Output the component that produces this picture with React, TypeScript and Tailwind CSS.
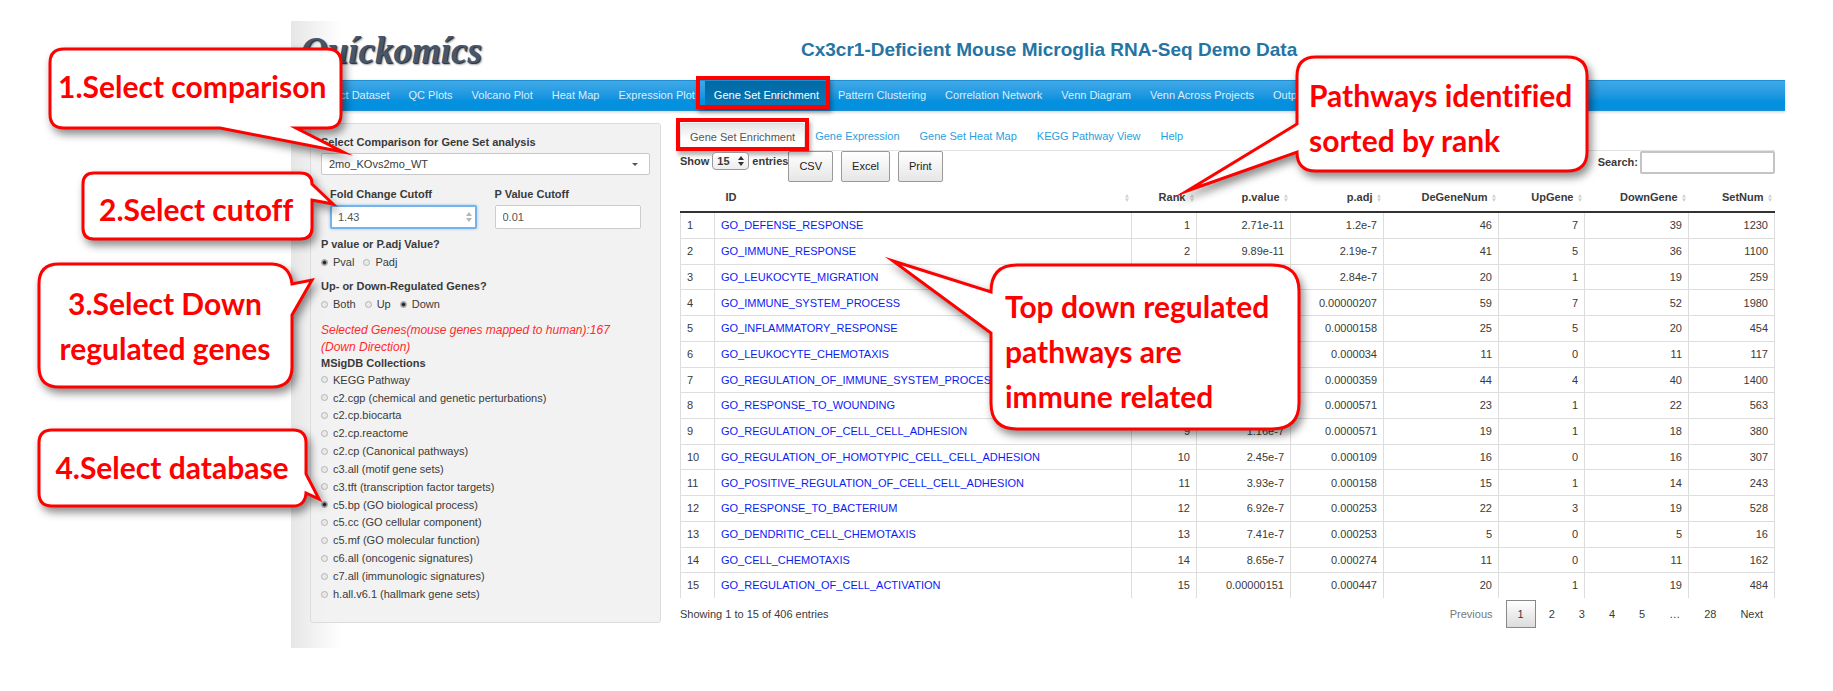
import React from "react";

const NAV = [
  "Select Dataset",
  "QC Plots",
  "Volcano Plot",
  "Heat Map",
  "Expression Plot",
  "Gene Set Enrichment",
  "Pattern Clustering",
  "Correlation Network",
  "Venn Diagram",
  "Venn Across Projects",
  "Output",
];

const TABS = ["Gene Set Enrichment", "Gene Expression", "Gene Set Heat Map", "KEGG Pathway View", "Help"];

const COLLECTIONS = [
  "KEGG Pathway",
  "c2.cgp (chemical and genetic perturbations)",
  "c2.cp.biocarta",
  "c2.cp.reactome",
  "c2.cp (Canonical pathways)",
  "c3.all (motif gene sets)",
  "c3.tft (transcription factor targets)",
  "c5.bp (GO biological process)",
  "c5.cc (GO cellular component)",
  "c5.mf (GO molecular function)",
  "c6.all (oncogenic signatures)",
  "c7.all (immunologic signatures)",
  "h.all.v6.1 (hallmark gene sets)",
];

const COLUMNS = [
  { name: "Rank", width: "w-[65px]" },
  { name: "p.value", width: "w-[94px]" },
  { name: "p.adj", width: "w-[93px]" },
  { name: "DeGeneNum", width: "w-[115px]" },
  { name: "UpGene", width: "w-[86px]" },
  { name: "DownGene", width: "w-[104px]" },
  { name: "SetNum", width: "w-[86px]" },
];

const ROWS: string[][] = [
  ["GO_DEFENSE_RESPONSE", "1", "2.71e-11", "1.2e-7", "46", "7", "39", "1230"],
  ["GO_IMMUNE_RESPONSE", "2", "9.89e-11", "2.19e-7", "41", "5", "36", "1100"],
  ["GO_LEUKOCYTE_MIGRATION", "", "", "2.84e-7", "20", "1", "19", "259"],
  ["GO_IMMUNE_SYSTEM_PROCESS", "", "", "0.00000207", "59", "7", "52", "1980"],
  ["GO_INFLAMMATORY_RESPONSE", "", "", "0.0000158", "25", "5", "20", "454"],
  ["GO_LEUKOCYTE_CHEMOTAXIS", "", "", "0.000034", "11", "0", "11", "117"],
  ["GO_REGULATION_OF_IMMUNE_SYSTEM_PROCESS", "", "", "0.0000359", "44", "4", "40", "1400"],
  ["GO_RESPONSE_TO_WOUNDING", "", "", "0.0000571", "23", "1", "22", "563"],
  ["GO_REGULATION_OF_CELL_CELL_ADHESION", "9", "1.16e-7", "0.0000571", "19", "1", "18", "380"],
  ["GO_REGULATION_OF_HOMOTYPIC_CELL_CELL_ADHESION", "10", "2.45e-7", "0.000109", "16", "0", "16", "307"],
  ["GO_POSITIVE_REGULATION_OF_CELL_CELL_ADHESION", "11", "3.93e-7", "0.000158", "15", "1", "14", "243"],
  ["GO_RESPONSE_TO_BACTERIUM", "12", "6.92e-7", "0.000253", "22", "3", "19", "528"],
  ["GO_DENDRITIC_CELL_CHEMOTAXIS", "13", "7.41e-7", "0.000253", "5", "0", "5", "16"],
  ["GO_CELL_CHEMOTAXIS", "14", "8.65e-7", "0.000274", "11", "0", "11", "162"],
  ["GO_REGULATION_OF_CELL_ACTIVATION", "15", "0.00000151", "0.000447", "20", "1", "19", "484"],
];

function Radio({ name, label, checked = false }: { name: string; label: string; checked?: boolean }) {
  return (
    <label className="flex items-center gap-[5px]">
      <input
        type="radio"
        name={name}
        defaultChecked={checked}
        className="size-[7px] appearance-none rounded-full border border-[#b4b4b4] bg-[#e9e9e9] checked:border-[#a0a0a0] checked:bg-[radial-gradient(circle,#222_1px,#e0e0e0_3px)]"
      />
      {label}
    </label>
  );
}

function SortIcon() {
  return (
    <svg viewBox="0 0 4 8" className="absolute right-[3px] bottom-[9px] h-2 w-1" fill="#d2d2d2" aria-hidden="true">
      <path d="M2 0 4 3.4H0zM2 8 0 4.6h4z" />
    </svg>
  );
}

function Spinner({ color }: { color: string }) {
  return (
    <svg viewBox="0 0 6 10" className="pointer-events-none absolute top-1/2 right-[5px] h-[10px] w-[6px] -translate-y-1/2" fill={color} aria-hidden="true">
      <path d="M3 0 6 4H0zM3 10 0 6h6z" />
    </svg>
  );
}

function Callout({
  place,
  size,
  d,
  textPlace,
  lines,
}: {
  place: string;
  size: [number, number];
  d: string;
  textPlace: string;
  lines: string[];
}) {
  return (
    <div className={`pointer-events-none absolute ${place}`}>
      <svg width={size[0]} height={size[1]} className="overflow-visible drop-shadow-[3px_5px_4px_rgba(0,0,0,0.45)]" aria-hidden="true">
        <path d={d} fill="#fff" stroke="#f00" strokeWidth="3" strokeMiterlimit="10" />
      </svg>
      <p className={`absolute font-['Lato','Open_Sans',sans-serif] text-[30px] leading-[45px] font-bold whitespace-nowrap text-[#f00] [font-variant-ligatures:none] ${textPlace}`}>
        {lines.map((line) => (
          <span key={line} className="block">
            {line}
          </span>
        ))}
      </p>
    </div>
  );
}

function Sidebar() {
  return (
    <aside className="flex h-[500px] w-[351px] shrink-0 flex-col rounded-[3px] border border-[#dcdcdc] bg-[#f1f1f1]/90 px-[10px] pt-[10px]">
      <label htmlFor="comparison" className="font-bold leading-4">
        Select Comparison for Gene Set analysis
      </label>
      <div className="relative mt-[3px]">
        <select
          id="comparison"
          className="h-[22px] w-full appearance-none rounded-[2px] border border-[#c8c8c8] bg-white px-[7px]"
        >
          <option>2mo_KOvs2mo_WT</option>
        </select>
        <svg viewBox="0 0 6 3" className="pointer-events-none absolute top-[10px] right-3 h-[3px] w-[6px]" fill="#555" aria-hidden="true">
          <path d="M0 0h6L3 3z" />
        </svg>
      </div>
      <div className="mt-[11px] grid grid-cols-2 gap-[18px] px-[9px]">
        <div>
          <label htmlFor="fold" className="block font-bold leading-4">
            Fold Change Cutoff
          </label>
          <div className="relative mt-[3px]">
            <input
              id="fold"
              defaultValue="1.43"
              className="h-6 w-full rounded-[2px] border-2 border-[#74b3ec] bg-white px-[6px] text-[#555] shadow-[0_0_3px_#8fc4f2]"
            />
            <Spinner color="#b5b5b5" />
          </div>
        </div>
        <div>
          <label htmlFor="pvalue" className="block font-bold leading-4">
            P Value Cutoff
          </label>
          <input
            id="pvalue"
            defaultValue="0.01"
            className="mt-[3px] h-6 w-full rounded-[2px] border border-[#ccc] bg-white px-[7px] text-[#555]"
          />
        </div>
      </div>
      <fieldset className="mt-[7px]">
        <legend className="font-bold leading-4">P value or P.adj Value?</legend>
        <div className="flex gap-[9px] leading-5">
          <Radio name="ptype" label="Pval" checked />
          <Radio name="ptype" label="Padj" />
        </div>
      </fieldset>
      <fieldset className="mt-[6px]">
        <legend className="font-bold leading-4">Up- or Down-Regulated Genes?</legend>
        <div className="flex gap-[9px] leading-5">
          <Radio name="direction" label="Both" />
          <Radio name="direction" label="Up" />
          <Radio name="direction" label="Down" checked />
        </div>
      </fieldset>
      <p className="mt-[8px] text-[12px] leading-[17px] text-[#ff2a2a] italic">
        Selected Genes(mouse genes mapped to human):167
        <br />
        (Down Direction)
      </p>
      <fieldset>
        <legend className="font-bold leading-[15px]">MSigDB Collections</legend>
        <div className="grid h-[232px] auto-rows-fr">
          {COLLECTIONS.map((name) => (
            <Radio key={name} name="collection" label={name} checked={name.startsWith("c5.bp")} />
          ))}
        </div>
      </fieldset>
    </aside>
  );
}

function Results() {
  return (
    <section className="min-w-0 flex-1">
      <div className="flex h-7 items-stretch border-b border-[#e2e2e2]">
        {TABS.map((tab, i) => (
          <button
            key={tab}
            type="button"
            className={
              i === 0
                ? "relative rounded-t-[3px] border border-b-0 border-[#ddd] bg-white bg-linear-to-b from-[#e6e6e6] to-white to-60% px-[9px] text-[#555]"
                : "px-[10px] text-[#2a9fe0]"
            }
          >
            {tab}
            {i === 0 && (
              <span className="absolute -inset-x-[5px] -top-[6px] -bottom-px border-4 border-[#f00] shadow-[2px_4px_4px_rgba(0,0,0,0.3)]" />
            )}
          </button>
        ))}
      </div>
      <div className="flex h-[33px] items-start">
        <label className="flex h-5 items-center gap-[3px] font-bold">
          Show
          <span className="relative">
            <select className="h-[18px] w-[37px] appearance-none rounded-[4px] border border-[#999] bg-linear-to-b from-white to-[#eee] px-1">
              <option>15</option>
            </select>
            <Spinner color="#333" />
          </span>
          entries
        </label>
        <div className="flex gap-2">
          {["CSV", "Excel", "Print"].map((b) => (
            <button
              key={b}
              type="button"
              className="h-[31px] rounded-[2px] border border-[#999] bg-linear-to-b from-white to-[#e6e6e6] px-[10px] text-[#222]"
            >
              {b}
            </button>
          ))}
        </div>
        <label className="ml-auto flex items-center gap-[2px] font-bold">
          Search:
          <input className="h-[23px] w-[135px] rounded-[2px] border-2 border-[#c4c4c4] bg-white px-1" />
        </label>
      </div>
      <table className="h-[414px] w-full table-fixed border-collapse">
        <thead>
          <tr className="h-[28px] border-b-2 border-[#333]">
            <th className="w-[34px]" />
            <th className="relative pl-[11px] text-left">
              ID
              <SortIcon />
            </th>
            {COLUMNS.map((c) => (
              <th key={c.name} className={`relative pr-[11px] text-right ${c.width}`}>
                {c.name}
                <SortIcon />
              </th>
            ))}
          </tr>
        </thead>
        <tbody>
          {ROWS.map((row, i) => (
            <tr key={row[0]} className="border-b border-[#ddd] last:border-b-0">
              <td className="border-x border-[#ddd] pl-[6px]">{i + 1}</td>
              <td className="border-r border-[#ddd] pl-[6px]">
                <a href="#" className="text-[#0a1cf5]">
                  {row[0]}
                </a>
              </td>
              {row.slice(1).map((cell, j) => (
                <td key={j} className="border-r border-[#ddd] pr-[6px] text-right">
                  {cell}
                </td>
              ))}
            </tr>
          ))}
        </tbody>
      </table>
      <div className="flex items-center justify-between pt-[2px]">
        <p>Showing 1 to 15 of 406 entries</p>
        <div className="flex gap-[2px] pr-px">
          {["Previous", "1", "2", "3", "4", "5", "…", "28", "Next"].map((p) => (
            <button
              key={p}
              type="button"
              className={
                p === "1"
                  ? "h-7 border border-[#888] bg-linear-to-b from-white to-[#dcdcdc] px-[11px]"
                  : p === "Previous"
                    ? "h-7 px-[11px] text-[#777]"
                    : "h-7 px-[11px]"
              }
            >
              {p}
            </button>
          ))}
        </div>
      </div>
    </section>
  );
}

export default function App() {
  return (
    <div className="relative bg-white pt-[21px] pr-12 pb-[43px] pl-[291px] font-['Liberation_Sans',Arial,sans-serif] text-[11px] text-[#3a3a3a]">
      <div className="bg-linear-to-r from-[#e6e6e6] to-white to-[50px] pb-5">
        <header className="flex h-[59px] items-center pl-[10px]">
          <a
            href="#"
            className="w-[500px] font-['Liberation_Serif',serif] text-[37px] leading-[48px] font-bold text-[#47566a] italic [text-shadow:1px_1px_1px_#1f2b3a,2px_2px_2px_#b4bbc4]"
          >
            Quíckomícs
          </a>
          <h1 className="text-[19px] font-bold text-[#2574a3]">Cx3cr1-Deficient Mouse Microglia RNA-Seq Demo Data</h1>
        </header>
        <nav className="flex h-[31px] gap-px border-y border-[#1f8fd3] bg-linear-to-b from-[#3fa9e6] to-[#0390df] to-70% pl-[18px] shadow-[0_1px_3px_rgba(0,0,0,0.2)]">
          {NAV.map((item) => (
            <a
              key={item}
              href="#"
              className={
                item === "Gene Set Enrichment"
                  ? "relative flex items-center bg-linear-to-b from-[#0369a3] to-[#0579bb] px-[9px] text-white"
                  : "flex items-center px-[9px] text-[#d9effb]"
              }
            >
              {item}
              {item === "Gene Set Enrichment" && (
                <span className="absolute -right-[2px] -left-[9px] -top-[5px] bottom-px border-4 border-[#f00] shadow-[2px_4px_4px_rgba(0,0,0,0.3)]" />
              )}
            </a>
          ))}
        </nav>
        <main className="mt-3 flex gap-[19px] pr-[10px] pl-[19px]">
          <Sidebar />
          <Results />
        </main>
      </div>

      <Callout
        place="top-[48px] left-[49px]"
        size={[297, 105]}
        d="M15 1H278Q292 1 292 15V66Q292 80 278 80H247L294 104L171 80H15Q1 80 1 66V15Q1 1 15 1Z"
        textPlace="top-[16px] left-[9px]"
        lines={["1.Select comparison"]}
      />
      <Callout
        place="top-[172px] left-[82px]"
        size={[253, 68]}
        d="M12 1H218Q230 1 230 12L251 32L230 28V56Q230 67 218 67H12Q1 67 1 56V12Q1 1 12 1Z"
        textPlace="top-[15px] left-[17px]"
        lines={["2.Select cutoff"]}
      />
      <Callout
        place="top-[263px] left-[38px]"
        size={[276, 125]}
        d="M21 1H234Q252 2 254 21L274 17L254 52V104Q254 124 234 124H21Q1 124 1 104V21Q1 1 21 1Z"
        textPlace="top-[18px] left-0 w-[254px] text-center"
        lines={["3.Select Down", "regulated genes"]}
      />
      <Callout
        place="top-[429px] left-[38px]"
        size={[284, 78]}
        d="M14 1H255Q268 1 268 14V45L281 70L268 64Q267 77 255 77H14Q1 77 1 64V14Q1 1 14 1Z"
        textPlace="top-[16px] left-0 w-[268px] text-center"
        lines={["4.Select database"]}
      />
      <Callout
        place="top-[56px] left-[1296px]"
        size={[292, 116]}
        d="M20 1H271Q291 1 291 20V96Q291 115 271 115H20Q1 115 1 96L-109 135L1 68V20Q1 1 20 1Z"
        textPlace="top-[17px] left-[13px]"
        lines={["Pathways identified", "sorted by rank"]}
      />
      <Callout
        place="top-[264px] left-[990px]"
        size={[310, 166]}
        d="M27 1H282Q309 1 309 27V139Q309 165 282 165H27Q1 165 1 139V69L-97 -3L1 28Q1 1 27 1Z"
        textPlace="top-[20px] left-[15px]"
        lines={["Top down regulated", "pathways are", "immune related"]}
      />
    </div>
  );
}
